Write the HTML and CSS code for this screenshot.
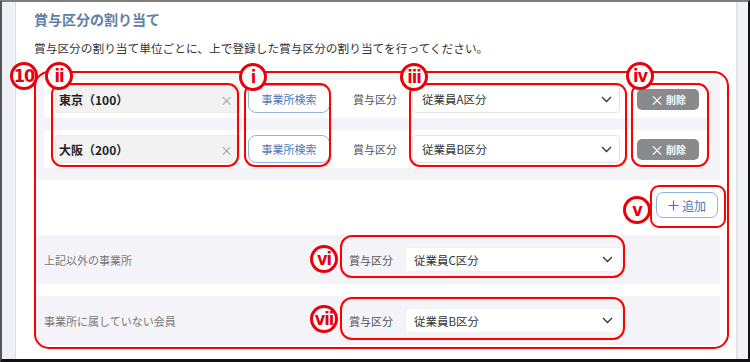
FILE: index.html
```html
<!DOCTYPE html>
<html lang="ja">
  <head>
    <meta charset="utf-8" />
    <title>賞与区分の割り当て</title>
    <link rel="stylesheet" href="styles.css">
  </head>

  <body>
    <div class="page">
      <div class="frame">
        <div class="frame__side frame__side--left"></div>

        <div class="frame__main">
          <h2 class="assign__title">賞与区分の割り当て</h2>
          <p class="assign__desc">賞与区分の割り当て単位ごとに、上で登録した賞与区分の割り当てを行ってください。</p>

          <div class="assign__list">
            <div class="assign__row">
              <div class="office-input">
                <span class="office-input__value">東京（100）</span>
                <span class="office-input__clear">×</span>
              </div>
              <button class="btn btn--outline btn--search">事業所検索</button>
              <span class="assign__label">賞与区分</span>
              <div class="select select--row">
                <span>従業員A区分</span>
                <svg class="select__chevron" width="11" height="7" viewBox="0 0 11 7"><polyline points="1,1 5.5,5.5 10,1" fill="none" stroke="#333" stroke-width="1.3"/></svg>
              </div>
              <button class="btn btn--delete"><span class="btn__x">×</span>削除</button>
            </div>
            <div class="assign__row">
              <div class="office-input">
                <span class="office-input__value">大阪（200）</span>
                <span class="office-input__clear">×</span>
              </div>
              <button class="btn btn--outline btn--search">事業所検索</button>
              <span class="assign__label">賞与区分</span>
              <div class="select select--row">
                <span>従業員B区分</span>
                <svg class="select__chevron" width="11" height="7" viewBox="0 0 11 7"><polyline points="1,1 5.5,5.5 10,1" fill="none" stroke="#333" stroke-width="1.3"/></svg>
              </div>
              <button class="btn btn--delete"><span class="btn__x">×</span>削除</button>
            </div>
          </div>

          <div class="assign__add">
            <button class="btn btn--outline btn--add">
              <svg width="11" height="11" viewBox="0 0 11 11"><path d="M5.5 0.5v10M0.5 5.5h10" stroke="#4b79b8" stroke-width="1.2" fill="none"/></svg>
              追加
            </button>
          </div>

          <div class="assign__band">
            <span class="assign__band-label">上記以外の事業所</span>
            <span class="assign__label assign__label--band">賞与区分</span>
            <div class="select select--band">
              <span>従業員C区分</span>
              <svg class="select__chevron" width="11" height="7" viewBox="0 0 11 7"><polyline points="1,1 5.5,5.5 10,1" fill="none" stroke="#333" stroke-width="1.3"/></svg>
            </div>
          </div>
          <div class="assign__band">
            <span class="assign__band-label">事業所に属していない会員</span>
            <span class="assign__label assign__label--band">賞与区分</span>
            <div class="select select--band">
              <span>従業員B区分</span>
              <svg class="select__chevron" width="11" height="7" viewBox="0 0 11 7"><polyline points="1,1 5.5,5.5 10,1" fill="none" stroke="#333" stroke-width="1.3"/></svg>
            </div>
          </div>
        </div>

        <div class="frame__side frame__side--right"></div>
      </div>

      <!-- annotation overlay -->
      <div class="note-box note-box--10"></div>
      <div class="note-box note-box--ii"></div>
      <div class="note-box note-box--i"></div>
      <div class="note-box note-box--iii"></div>
      <div class="note-box note-box--iv"></div>
      <div class="note-box note-box--v"></div>
      <div class="note-box note-box--vi"></div>
      <div class="note-box note-box--vii"></div>

      <span class="note-mark note-mark--10">10</span>
      <span class="note-mark note-mark--ii">ii</span>
      <span class="note-mark note-mark--i">i</span>
      <span class="note-mark note-mark--iii">iii</span>
      <span class="note-mark note-mark--iv">iv</span>
      <span class="note-mark note-mark--v">v</span>
      <span class="note-mark note-mark--vi">vi</span>
      <span class="note-mark note-mark--vii">vii</span>
    </div>
  </body>
</html>
```

FILE: styles.css
```css
body {
  margin: 0;
  font-family: "Noto Sans CJK JP", "Noto Sans", sans-serif;
}

.page {
  position: relative;
  width: 750px;
  height: 362px;
  overflow: hidden;
}

.frame {
  display: flex;
  width: 750px;
  height: 362px;
  box-sizing: border-box;
  border-top: 2px solid #7d7d7d;
  border-left: 2px solid #555;
  border-right: 2px solid #111;
  border-bottom: 3px solid #111;
  background: #fff;
}

.frame__side--left {
  width: 13px;
  background: #eef0f6;
  border-right: 1px solid #dcdfe8;
}

.frame__side--right {
  width: 10px;
  background: #f1f2f7;
  border-left: 2px solid #e1e3ea;
}

.frame__main {
  flex: 1;
  padding: 7px 16px 0 20px;
}

.assign__title {
  margin: 0 0 0 -2px;
  font-size: 14px;
  line-height: 20px;
  font-weight: 700;
  color: #6080a8;
}

.assign__desc {
  margin: 11px 0 0 -2px;
  font-size: 11.7px;
  line-height: 16px;
  color: #333;
}

.assign__list {
  display: flex;
  flex-direction: column;
  gap: 12px;
  margin-top: 20px;
  padding: 4px 12px 12px 8px;
  background: #f4f4f8;
}

.assign__row {
  display: flex;
  align-items: center;
  height: 38px;
  padding-left: 11px;
  background: #fff;
}

.office-input {
  display: flex;
  align-items: center;
  justify-content: space-between;
  width: 185px;
  height: 28px;
  box-sizing: border-box;
  padding: 0 6px 0 3px;
  background: #f2f2f2;
  border: 1px solid #e9e9e9;
  border-radius: 4px;
  font-size: 12px;
  font-weight: 700;
  color: #222;
}

.office-input__clear {
  font-weight: 400;
  font-size: 13px;
  color: #9a9a9a;
}

.btn {
  padding: 0;
  font-family: inherit;
  cursor: pointer;
}

.btn--outline {
  background: #fff;
  border: 1px solid #90b4e0;
  color: #4b79b8;
}

.btn--search {
  margin-left: 8px;
  width: 82px;
  height: 28px;
  border-radius: 8px;
  font-size: 11px;
}

.assign__label {
  margin-left: 23px;
  width: 44px;
  font-size: 11px;
  color: #555;
  white-space: nowrap;
}

.select {
  display: flex;
  align-items: center;
  justify-content: space-between;
  box-sizing: border-box;
  background: #fff;
  color: #333;
}

.select--row {
  margin-left: 15px;
  width: 208px;
  height: 28px;
  padding: 0 7px 0 9px;
  border: 1px solid #e2e2e2;
  border-radius: 4px;
  font-size: 11.5px;
}

.btn--delete {
  display: flex;
  align-items: center;
  justify-content: center;
  gap: 2px;
  margin-left: 17px;
  width: 62px;
  height: 21px;
  border: none;
  border-radius: 5px;
  background: #8a8a8a;
  color: #fff;
  font-size: 10px;
  font-weight: 700;
}

.btn__x {
  font-size: 14px;
  font-weight: 400;
  line-height: 1;
}

.assign__add {
  display: flex;
  justify-content: flex-end;
  padding: 12px 2px 17px 0;
}

.btn--add {
  display: flex;
  align-items: center;
  justify-content: center;
  gap: 3px;
  width: 62px;
  height: 26px;
  border-radius: 7px;
  font-size: 12px;
}

.assign__band {
  display: flex;
  align-items: center;
  height: 49px;
  padding-left: 8px;
  background: #f4f4f8;
}

.assign__band + .assign__band {
  margin-top: 12px;
}

.assign__band-label {
  width: 305px;
  font-size: 11px;
  color: #777;
}

.assign__label--band {
  margin-left: 0;
  margin-right: 12px;
}

.select--band {
  width: 217px;
  height: 25px;
  padding: 0 8px 0 8px;
  border: 1px solid #f0f0f4;
  border-radius: 3px;
  font-size: 11.5px;
}

/* annotation overlay */
.note-box {
  position: absolute;
  box-sizing: border-box;
  border: 2px solid #f00;
  border-radius: 11px;
}

.note-box--10 { left: 34px; top: 71px; width: 695px; height: 278px; border-radius: 15px; }
.note-box--ii { left: 51px; top: 83px; width: 188px; height: 84px; }
.note-box--i { left: 244px; top: 83px; width: 87px; height: 84px; }
.note-box--iii { left: 409px; top: 83px; width: 218px; height: 84px; }
.note-box--iv { left: 631px; top: 83px; width: 78px; height: 84px; }
.note-box--v { left: 650px; top: 185px; width: 76px; height: 43px; border-radius: 9px; }
.note-box--vi { left: 340px; top: 235px; width: 285px; height: 43px; border-radius: 12px; }
.note-box--vii { left: 340px; top: 297px; width: 285px; height: 43px; border-radius: 12px; }

.note-mark {
  position: absolute;
  display: flex;
  align-items: center;
  justify-content: center;
  width: 28px;
  height: 28px;
  box-sizing: border-box;
  border: 3px solid #e8000b;
  border-radius: 50%;
  background: #fff;
  color: #e8000b;
  font-family: "DejaVu Sans Condensed", "Liberation Sans", sans-serif;
  font-weight: 700;
  font-size: 18px;
  letter-spacing: -1px;
  line-height: 1;
}

.note-mark--10 { left: 10px; top: 62px; }
.note-mark--ii { left: 45px; top: 62px; }
.note-mark--i { left: 239px; top: 63px; }
.note-mark--iii { left: 400px; top: 63px; }
.note-mark--iv { left: 626px; top: 62px; }
.note-mark--v { left: 623px; top: 196px; }
.note-mark--vi { left: 310px; top: 245px; }
.note-mark--vii { left: 310px; top: 305px; }
```
